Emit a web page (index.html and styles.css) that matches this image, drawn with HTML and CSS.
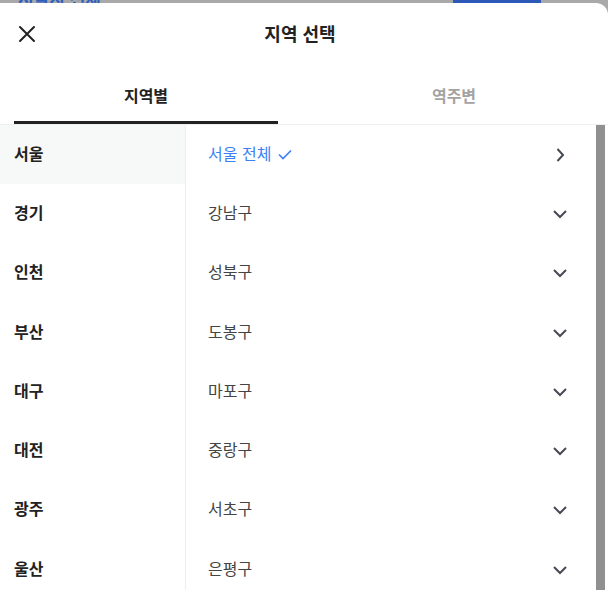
FILE: index.html
```html
<!DOCTYPE html>
<html lang="ko">
<head>
    <meta charset="UTF-8">
    <meta name="viewport" content="width=device-width, initial-scale=1.0">
    <title>지역 선택</title>
    <link rel="stylesheet" href="styles.css">
</head>
<body>
    <div class="backdrop">
        <span class="backdrop-title">서울시 전체</span>
        <span class="backdrop-button">지역변경</span>
    </div>

    <div class="sheet">
        <div class="sheet-header">
            <button class="close" aria-label="닫기">
                <svg width="18" height="18" viewBox="0 0 18 18" fill="none" stroke="#222" stroke-width="2" stroke-linecap="round">
                    <path d="M2 2L16 16M16 2L2 16"/>
                </svg>
            </button>
            <h1 class="sheet-title">지역 선택</h1>
        </div>

        <div class="tabs">
            <div class="tab active">지역별</div>
            <div class="tab">역주변</div>
        </div>

        <div class="picker">
            <ul class="cities">
                <li class="selected">서울</li>
                <li>경기</li>
                <li>인천</li>
                <li>부산</li>
                <li>대구</li>
                <li>대전</li>
                <li>광주</li>
                <li>울산</li>
            </ul>
            <ul class="districts">
                <li class="current">
                    <span>서울 전체
                        <svg class="check" width="14" height="11" viewBox="0 0 14 11" fill="none" stroke="#3d7ff5" stroke-width="1.6">
                            <path d="M1 5.5L5 9.5L13 1.5"/>
                        </svg>
                    </span>
                    <svg class="chev" width="14" height="14" viewBox="0 0 14 14" fill="none" stroke="#474a54" stroke-width="2">
                        <path d="M4.5 1L10 7L4.5 13"/>
                    </svg>
                </li>
                <li><span>강남구</span><svg class="chev" width="14" height="14" viewBox="0 0 14 14" fill="none" stroke="#474a54" stroke-width="2"><path d="M1 4L7 10L13 4"/></svg></li>
                <li><span>성북구</span><svg class="chev" width="14" height="14" viewBox="0 0 14 14" fill="none" stroke="#474a54" stroke-width="2"><path d="M1 4L7 10L13 4"/></svg></li>
                <li><span>도봉구</span><svg class="chev" width="14" height="14" viewBox="0 0 14 14" fill="none" stroke="#474a54" stroke-width="2"><path d="M1 4L7 10L13 4"/></svg></li>
                <li><span>마포구</span><svg class="chev" width="14" height="14" viewBox="0 0 14 14" fill="none" stroke="#474a54" stroke-width="2"><path d="M1 4L7 10L13 4"/></svg></li>
                <li><span>중랑구</span><svg class="chev" width="14" height="14" viewBox="0 0 14 14" fill="none" stroke="#474a54" stroke-width="2"><path d="M1 4L7 10L13 4"/></svg></li>
                <li><span>서초구</span><svg class="chev" width="14" height="14" viewBox="0 0 14 14" fill="none" stroke="#474a54" stroke-width="2"><path d="M1 4L7 10L13 4"/></svg></li>
                <li><span>은평구</span><svg class="chev" width="14" height="14" viewBox="0 0 14 14" fill="none" stroke="#474a54" stroke-width="2"><path d="M1 4L7 10L13 4"/></svg></li>
            </ul>
            <div class="scrollbar"><div class="thumb"></div></div>
        </div>
    </div>
</body>
</html>
```

FILE: styles.css
```css
body {
    margin: 0;
    height: 590px;
    overflow: hidden;
    background: #a9a9a9;
    font-family: "Noto Sans CJK KR", "Noto Sans", sans-serif;
    color: #222;
}
.backdrop {
    height: 3px;
    overflow: hidden;
    display: flex;
    align-items: flex-end;
    padding: 0 67px 0 18px;
    justify-content: space-between;
}
.backdrop-title {
    flex-shrink: 0;
    color: #2f5fbf;
    font-size: 17px;
    font-weight: 700;
    line-height: 1;
    margin-bottom: -3px;
}
.backdrop-button {
    flex-shrink: 0;
    width: 88px;
    height: 30px;
    background: #2c59b8;
    color: #8fa8de;
    font-size: 14px;
    text-align: center;
    line-height: 24px;
}
.sheet {
    background: #fff;
    height: 587px;
    border-top-right-radius: 12px;
    display: flex;
    flex-direction: column;
}
.sheet-header {
    height: 64px;
    display: flex;
    align-items: center;
    justify-content: center;
    position: relative;
    padding-right: 8px;
    padding-bottom: 4px;
    box-sizing: border-box;
}
.close {
    position: absolute;
    left: 18px;
    top: 22px;
    border: 0;
    background: none;
    padding: 0;
    display: flex;
}
.sheet-title {
    margin: 0;
    font-size: 18px;
    font-weight: 700;
}
.tabs {
    height: 57px;
    display: grid;
    grid-template-columns: 1fr 1fr;
    column-gap: 44px;
    padding: 0 22px 0 14px;
    border-bottom: 1px solid #eeeeee;
}
.tab {
    display: flex;
    align-items: center;
    justify-content: center;
    font-size: 16px;
    font-weight: 700;
    color: #a3a3a3;
    border-bottom: 3px solid transparent;
    padding-top: 1px;
}
.tab.active {
    color: #222;
    border-bottom-color: #222;
}
.picker {
    flex: 1;
    display: flex;
    min-height: 0;
}
.cities, .districts {
    list-style: none;
    margin: 0;
    padding: 0;
}
.cities {
    width: 185px;
    border-right: 1px solid #eeeeee;
}
.cities li {
    height: 59.3px;
    box-sizing: border-box;
    display: flex;
    align-items: center;
    padding: 0 0 4px 14px;
    font-size: 16px;
    font-weight: 700;
}
.cities li.selected {
    background: #f7f8f8;
}
.districts {
    flex: 1;
    padding: 0 29px 0 22px;
}
.districts li {
    height: 59.3px;
    box-sizing: border-box;
    display: flex;
    align-items: center;
    justify-content: space-between;
    font-size: 16px;
    color: #444;
}
.districts li span {
    padding-bottom: 4px;
}
.districts li.current {
    color: #3d7ff5;
}
.check {
    margin-left: 2px;
}
.scrollbar {
    width: 12px;
    display: flex;
}
.thumb {
    width: 9px;
    background: #909090;
}
```
